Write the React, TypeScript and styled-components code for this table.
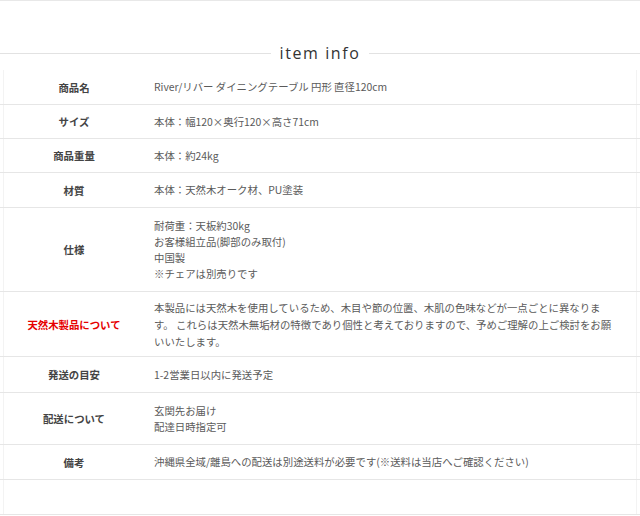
import React from "react";
import styled, { createGlobalStyle } from "styled-components";

const Global = createGlobalStyle`
  html, body { margin: 0; padding: 0; background: #fff; }
  body { font-family: "Noto Sans CJK JP", "Noto Sans", sans-serif; }
`;

const Page = styled.div`
  width: 640px;
  height: 516px;
  box-sizing: border-box;
  border-top: 1px solid #e8e8e8;
  overflow: hidden;
`;

const Header = styled.div`
  height: 69px;
  box-sizing: border-box;
  padding-top: 42px;
`;

const Title = styled.h2`
  margin: 0;
  height: 20px;
  display: flex;
  align-items: center;
  gap: 9px;
  font-family: "Open Sans", "Noto Sans", sans-serif;
  font-weight: 500;
  font-size: 16px;
  letter-spacing: 1.6px;
  color: #333;
  &::before, &::after {
    content: "";
    flex: 1;
    height: 1px;
    background: #e2e2e2;
  }
`;

const Table = styled.div`
  margin: 0 3px;
  border-left: 1px solid #f3f3f3;
  border-right: 1px solid #f3f3f3;
`;

const Row = styled.div<{ $h: number }>`
  display: grid;
  grid-template-columns: 140px 1fr;
  height: ${(p) => p.$h}px;
  box-sizing: border-box;
  border-bottom: 1px solid #e6e6e6;
  margin: 0 -4px;
  padding: 0 4px;
`;

const Label = styled.div<{ $red?: boolean }>`
  display: flex;
  align-items: center;
  justify-content: center;
  font-size: 10.4px;
  font-weight: 700;
  color: ${(p) => (p.$red ? "#e60000" : "#444")};
`;

const Value = styled.div<{ $lh?: number }>`
  display: flex;
  flex-direction: column;
  justify-content: center;
  padding: 0 16px 0 10px;
  font-size: 10.4px;
  line-height: ${(p) => p.$lh ?? 16}px;
  color: #5a5a5a;
`;

type Item = { label?: string; lines?: string[]; h: number; red?: boolean; lh?: number };

const items: Item[] = [
  { label: "商品名", lines: ["River/リバー ダイニングテーブル 円形 直径120cm"], h: 35 },
  { label: "サイズ", lines: ["本体：幅120×奥行120×高さ71cm"], h: 34 },
  { label: "商品重量", lines: ["本体：約24kg"], h: 34 },
  { label: "材質", lines: ["本体：天然木オーク材、PU塗装"], h: 35 },
  {
    label: "仕様",
    lines: ["耐荷重：天板約30kg", "お客様組立品(脚部のみ取付)", "中国製", "※チェアは別売りです"],
    h: 84,
  },
  {
    label: "天然木製品について",
    red: true,
    lh: 17,
    lines: [
      "本製品には天然木を使用しているため、木目や節の位置、木肌の色味などが一点ごとに異なります。 これらは天然木無垢材の特徴であり個性と考えておりますので、予めご理解の上ご検討をお願いいたします。",
    ],
    h: 65,
  },
  { label: "発送の目安", lines: ["1-2営業日以内に発送予定"], h: 36 },
  { label: "配送について", lines: ["玄関先お届け", "配達日時指定可"], h: 52 },
  { label: "備考", lines: ["沖縄県全域/離島への配送は別途送料が必要です(※送料は当店へご確認ください)"], h: 35 },
  { h: 35 },
];

export default function App() {
  return (
    <>
      <Global />
      <Page>
        <Header>
          <Title>item info</Title>
        </Header>
        <Table>
          {items.map((it, i) => (
            <Row key={i} $h={it.h}>
              <Label $red={it.red}>{it.label}</Label>
              <Value $lh={it.lh}>
                {it.lines?.map((l, j) => (
                  <span key={j}>{l}</span>
                ))}
              </Value>
            </Row>
          ))}
        </Table>
      </Page>
    </>
  );
}
